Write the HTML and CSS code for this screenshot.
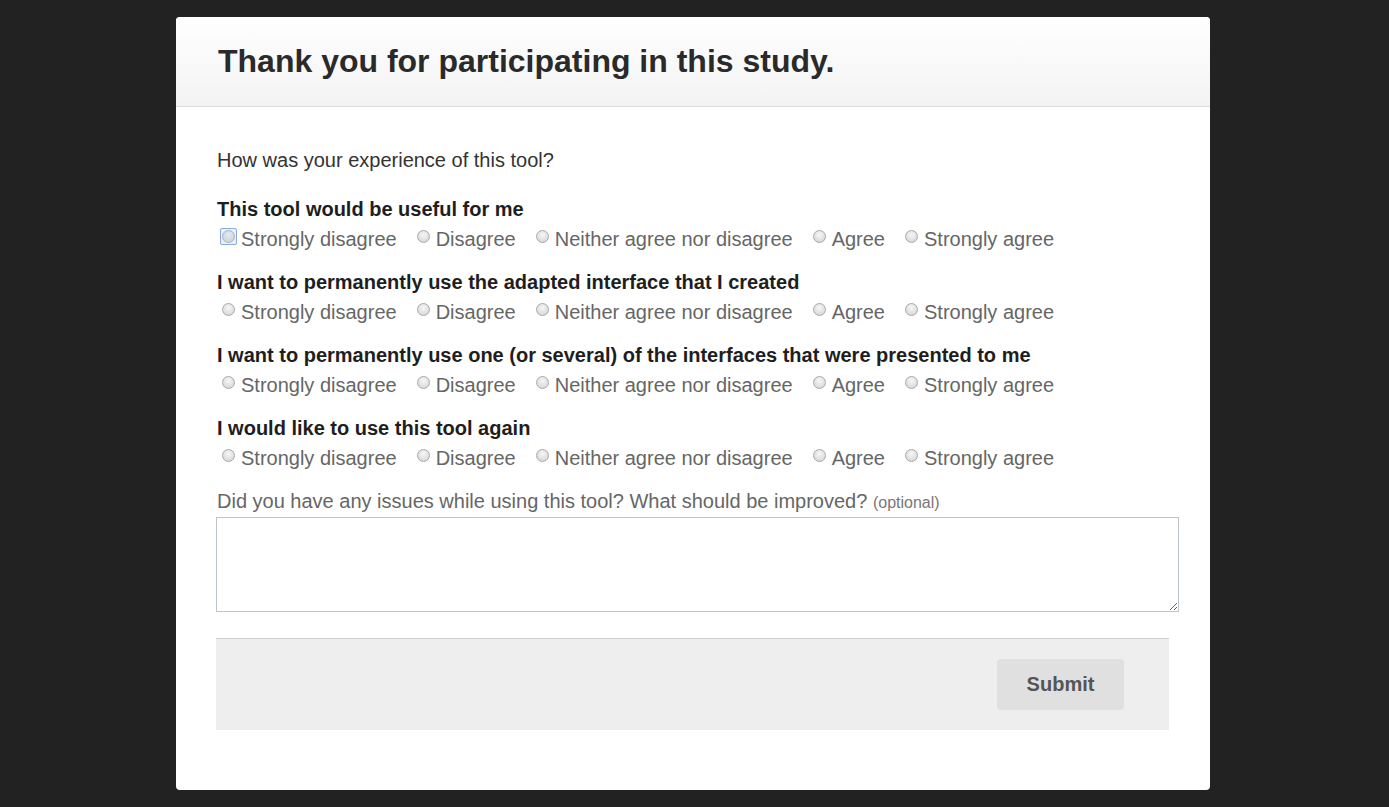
FILE: index.html
```html
<!DOCTYPE html>
<html lang="en">
<head>
<meta charset="utf-8">
<title>Study feedback</title>
<link rel="stylesheet" href="styles.css">
</head>
<body>
<div class="modal">
  <div class="modal-header">
    <h1 class="title">Thank you for participating in this study.</h1>
  </div>
  <form class="modal-body">
    <p class="intro">How was your experience of this tool?</p>

    <div class="question">
      <div class="q-title">This tool would be useful for me</div>
      <div class="options">
        <label class="opt"><span class="radio focused"></span>Strongly disagree</label>
        <label class="opt"><span class="radio"></span>Disagree</label>
        <label class="opt"><span class="radio"></span>Neither agree nor disagree</label>
        <label class="opt"><span class="radio"></span>Agree</label>
        <label class="opt"><span class="radio"></span>Strongly agree</label>
      </div>
    </div>

    <div class="question">
      <div class="q-title">I want to permanently use the adapted interface that I created</div>
      <div class="options">
        <label class="opt"><span class="radio"></span>Strongly disagree</label>
        <label class="opt"><span class="radio"></span>Disagree</label>
        <label class="opt"><span class="radio"></span>Neither agree nor disagree</label>
        <label class="opt"><span class="radio"></span>Agree</label>
        <label class="opt"><span class="radio"></span>Strongly agree</label>
      </div>
    </div>

    <div class="question">
      <div class="q-title">I want to permanently use one (or several) of the interfaces that were presented to me</div>
      <div class="options">
        <label class="opt"><span class="radio"></span>Strongly disagree</label>
        <label class="opt"><span class="radio"></span>Disagree</label>
        <label class="opt"><span class="radio"></span>Neither agree nor disagree</label>
        <label class="opt"><span class="radio"></span>Agree</label>
        <label class="opt"><span class="radio"></span>Strongly agree</label>
      </div>
    </div>

    <div class="question">
      <div class="q-title">I would like to use this tool again</div>
      <div class="options">
        <label class="opt"><span class="radio"></span>Strongly disagree</label>
        <label class="opt"><span class="radio"></span>Disagree</label>
        <label class="opt"><span class="radio"></span>Neither agree nor disagree</label>
        <label class="opt"><span class="radio"></span>Agree</label>
        <label class="opt"><span class="radio"></span>Strongly agree</label>
      </div>
    </div>

    <label class="issues-label">Did you have any issues while using this tool? What should be improved? <span class="optional">(optional)</span></label>
    <textarea class="issues"></textarea>

    <div class="footer">
      <button type="button" class="submit">Submit</button>
    </div>
  </form>
</div>
</body>
</html>
```

FILE: styles.css
```css
html, body {
  margin: 0;
  padding: 0;
  background: #222222;
  font-family: "Liberation Sans", Arial, sans-serif;
}

body {
  height: 807px;
  overflow: hidden;
}

.modal {
  margin: 17px 0 0 176px;
  width: 1034px;
  height: 773px;
  background: #ffffff;
  border-radius: 4px;
  box-sizing: border-box;
}

.modal-header {
  height: 90px;
  box-sizing: border-box;
  border-bottom: 1px solid #dcdcdc;
  background: linear-gradient(to bottom, #ffffff 0%, #f3f3f3 100%);
  border-radius: 4px 4px 0 0;
  padding-left: 42px;
  display: flex;
  align-items: center;
}

.title {
  margin: 0;
  font-size: 32px;
  font-weight: bold;
  color: #2a2a2a;
  line-height: 38px;
  padding-bottom: 1px;
}

.modal-body {
  padding: 38px 40px 0 40px;
  display: block;
}

.intro {
  margin: 0 0 19px 1px;
  font-size: 20px;
  line-height: 30px;
  color: #333333;
}

.question {
  margin-bottom: 13px;
}

.q-title {
  font-size: 20px;
  font-weight: bold;
  color: #1e1e1e;
  line-height: 30px;
  padding-left: 1px;
}

.options {
  display: flex;
  line-height: 30px;
  font-size: 20px;
  color: #666666;
}

.opt {
  display: flex;
  align-items: center;
  margin-right: 14px;
}

.radio {
  width: 13px;
  height: 13px;
  box-sizing: border-box;
  border-radius: 50%;
  border: 1px solid #a9a9a9;
  background: radial-gradient(circle at 50% 35%, #f6f6f6 0%, #dcdcdc 70%, #cfcfcf 100%);
  margin: 0 6px 5px 6px;
  flex: none;
}

.radio.focused {
  position: relative;
}

.radio.focused::after {
  content: "";
  position: absolute;
  left: -3px;
  top: -3px;
  width: 17px;
  height: 17px;
  box-sizing: border-box;
  border: 1px solid #86abdc;
  border-radius: 2px;
  background: rgba(170, 200, 240, 0.25);
}

.issues-label {
  display: block;
  margin-top: 14px;
  font-size: 20px;
  line-height: 28px;
  color: #666666;
  padding-left: 1px;
}

.optional {
  font-size: 16px;
  color: #777777;
}

.issues {
  display: block;
  width: 963px;
  height: 95px;
  box-sizing: border-box;
  margin: 0 0 26px 0;
  border: 1px solid #bcc4cc;
  background: #ffffff;
  resize: both;
  font-family: "Liberation Sans", Arial, sans-serif;
}

.footer {
  height: 92px;
  box-sizing: border-box;
  border-top: 1px solid #cfcfcf;
  background: #eeeeee;
  display: flex;
  justify-content: flex-end;
  align-items: center;
  padding-right: 45px;
  margin-right: 1px;
}

.submit {
  width: 127px;
  height: 51px;
  border: none;
  border-radius: 4px;
  background: #e0e0e0;
  color: #555555;
  font-family: "Liberation Sans", Arial, sans-serif;
  font-size: 20px;
  font-weight: bold;
  padding: 0;
}
```
